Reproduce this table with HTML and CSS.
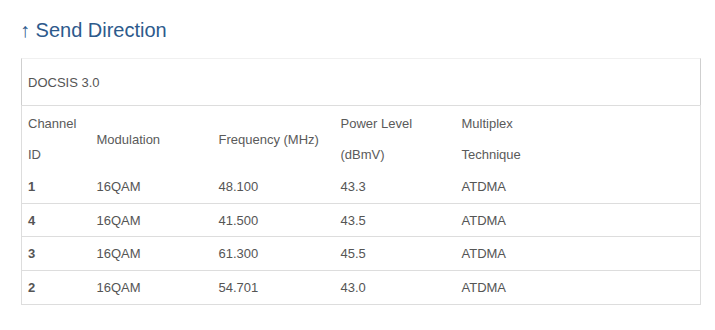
FILE: index.html
```html
<!DOCTYPE html>
<html>
<head>
<meta charset="utf-8">
<link rel="stylesheet" href="styles.css">
</head>
<body>
<div class="page">
  <h2 class="title">↑ Send Direction</h2>
  <div class="box">
    <div class="caption">DOCSIS 3.0</div>
    <table class="grid">
      <colgroup>
        <col class="c1"><col class="c2"><col class="c3"><col class="c4"><col class="c5">
      </colgroup>
      <thead>
        <tr>
          <th>Channel<br>ID</th>
          <th>Modulation</th>
          <th>Frequency (MHz)</th>
          <th>Power Level<br>(dBmV)</th>
          <th>Multiplex<br>Technique</th>
        </tr>
      </thead>
      <tbody>
        <tr><td class="id">1</td><td>16QAM</td><td>48.100</td><td>43.3</td><td>ATDMA</td></tr>
        <tr><td class="id">4</td><td>16QAM</td><td>41.500</td><td>43.5</td><td>ATDMA</td></tr>
        <tr><td class="id">3</td><td>16QAM</td><td>61.300</td><td>45.5</td><td>ATDMA</td></tr>
        <tr><td class="id">2</td><td>16QAM</td><td>54.701</td><td>43.0</td><td>ATDMA</td></tr>
      </tbody>
    </table>
  </div>
</div>
</body>
</html>
```
FILE: styles.css
```css
html, body {
  margin: 0;
  padding: 0;
  background: #fff;
}
body {
  font-family: "Liberation Sans", Arial, sans-serif;
  color: #555;
}
.page {
  padding: 18px 0 0 21px;
}
.title {
  margin: 0 0 16px -1px;
  font-size: 20px;
  line-height: 24px;
  font-weight: normal;
  color: #2d5a8c;
}
.box {
  width: 680px;
}
.caption {
  border: 1px solid #cfcfcf;
  border-top-color: #f0f0f0;
  border-bottom: none;
  padding: 15px 6px 13px;
  font-size: 13px;
  line-height: 18px;
  color: #555;
}
.grid {
  width: 680px;
  border-collapse: collapse;
  table-layout: fixed;
  font-size: 13px;
  border: 1px solid #ddd;
}
.c1 { width: 69px; }
.c2 { width: 122px; }
.c3 { width: 122px; }
.c4 { width: 121px; }
.c5 { width: auto; }
.grid th {
  font-weight: normal;
  text-align: left;
  line-height: 31px;
  padding: 2px 6px 0;
  vertical-align: middle;
  color: #5a5a5a;
}
.grid td {
  padding: 9px 6px 7px;
  line-height: 16.67px;
  color: #555;
}
.grid tbody tr + tr td {
  border-top: 1px solid #ddd;
}
.grid td.id {
  font-weight: bold;
}
```
